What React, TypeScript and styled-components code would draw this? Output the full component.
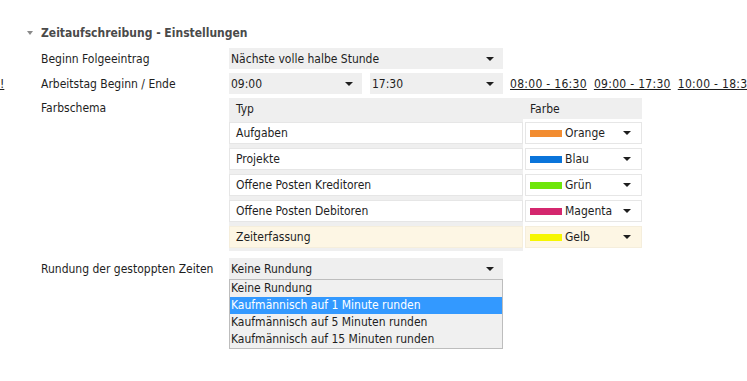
import React from 'react';
import styled, { createGlobalStyle } from 'styled-components';

const GlobalStyle = createGlobalStyle`
  body {
    margin: 0;
    background: #ffffff;
    font-family: "DejaVu Sans Condensed", "DejaVu Sans", sans-serif;
    font-size: 12px;
    color: #1e1e1e;
  }
`;

const Page = styled.div`
  width: 747px;
  height: 381px;
  overflow: hidden;
  padding-top: 24px;
  box-sizing: border-box;
`;

const SectionHeader = styled.div`
  display: flex;
  align-items: center;
  padding-left: 27px;
  height: 18px;
  font-weight: bold;
  font-size: 12px;
  color: #4a4a4a;
`;

const Caret = styled.span`
  width: 0;
  height: 0;
  border-left: 3px solid transparent;
  border-right: 3px solid transparent;
  border-top: 4px solid #8a8a8a;
  margin-right: 8px;
`;

const Form = styled.div`
  display: grid;
  grid-template-columns: 41px 188px auto;
  row-gap: 4px;
  margin-top: 6px;
`;

const Edge = styled.div`
  display: flex;
  align-items: center;
  a {
    color: #222;
    text-decoration: underline;
  }
`;

const Label = styled.div<{ $top?: boolean; $gap?: number }>`
  display: flex;
  align-items: ${(p) => (p.$top ? 'flex-start' : 'center')};
  padding-top: ${(p) => (p.$top ? '3px' : '0')};
  margin-top: ${(p) => p.$gap ?? 0}px;
  height: ${(p) => (p.$top ? 'auto' : '21px')};
`;

const Controls = styled.div<{ $gap?: number }>`
  display: flex;
  align-items: center;
  gap: 8px;
  margin-top: ${(p) => p.$gap ?? 0}px;
`;

const SelectBox = styled.div<{ $w: number }>`
  position: relative;
  display: flex;
  align-items: center;
  justify-content: space-between;
  flex-shrink: 0;
  width: ${(p) => p.$w}px;
  height: 21px;
  padding: 0 9px 0 2px;
  box-sizing: border-box;
  background: #efefef;
`;

const Arrow = styled.span`
  width: 0;
  height: 0;
  border-left: 4px solid transparent;
  border-right: 4px solid transparent;
  border-top: 4px solid #1e1e1e;
`;

const Preset = styled.a`
  color: #1e1e1e;
  text-decoration: underline;
  white-space: nowrap;
  letter-spacing: 0.3px;
  margin-left: -1px;
`;

const Table = styled.div`
  width: 413px;
`;

const HeadRow = styled.div`
  display: grid;
  grid-template-columns: 296px 117px;
  height: 21px;
  background: #efefef;
  align-items: center;
  span:first-child {
    padding-left: 7px;
  }
  span:last-child {
    padding-left: 5px;
  }
`;

const Row = styled.div`
  display: grid;
  grid-template-columns: 294px 117px;
  column-gap: 2px;
  height: 26px;
`;

const TypeCell = styled.div<{ $active?: boolean }>`
  background: #efefef;
  padding: 3px 0 3px 0;
  & > div {
    display: flex;
    align-items: center;
    height: 20px;
    padding-left: 6px;
    border: 1px solid ${(p) => (p.$active ? '#f5eedc' : '#e6e6e6')};
    background: ${(p) => (p.$active ? '#fdf6e4' : '#ffffff')};
  }
`;

const ColorCell = styled.div<{ $active?: boolean }>`
  display: flex;
  align-items: center;
  margin-top: 3px;
  height: 22px;
  box-sizing: border-box;
  padding: 0 10px 0 4px;
  border: 1px solid ${(p) => (p.$active ? '#f5eedc' : '#e6e6e6')};
  background: ${(p) => (p.$active ? '#fdf6e4' : '#ffffff')};
`;

const Swatch = styled.span<{ $c: string }>`
  width: 32px;
  height: 7px;
  background: ${(p) => p.$c};
  margin-right: 3px;
`;

const ColorName = styled.span`
  flex: 1;
`;

const DropWrap = styled.div`
  position: relative;
`;

const List = styled.ul`
  position: absolute;
  left: 0;
  top: 21px;
  width: 274px;
  margin: 0;
  padding: 0;
  list-style: none;
  background: #f0f0f0;
  border: 1px solid #bdbdbd;
  box-sizing: border-box;
`;

const Item = styled.li<{ $sel?: boolean }>`
  height: 17px;
  line-height: 17px;
  padding-left: 1px;
  white-space: nowrap;
  background: ${(p) => (p.$sel ? '#3399ff' : 'transparent')};
  color: ${(p) => (p.$sel ? '#ffffff' : '#1e1e1e')};
`;

const colors = [
  { typ: 'Aufgaben', name: 'Orange', c: '#f28c30' },
  { typ: 'Projekte', name: 'Blau', c: '#0a74da' },
  { typ: 'Offene Posten Kreditoren', name: 'Grün', c: '#6ee60a' },
  { typ: 'Offene Posten Debitoren', name: 'Magenta', c: '#d4276e' },
  { typ: 'Zeiterfassung', name: 'Gelb', c: '#f6f600', active: true },
];

const rundung = [
  'Keine Rundung',
  'Kaufmännisch auf 1 Minute runden',
  'Kaufmännisch auf 5 Minuten runden',
  'Kaufmännisch auf 15 Minuten runden',
];

export default function App() {
  return (
    <Page>
      <GlobalStyle />
      <SectionHeader>
        <Caret />
        Zeitaufschreibung - Einstellungen
      </SectionHeader>
      <Form>
        <Edge />
        <Label>Beginn Folgeeintrag</Label>
        <Controls>
          <SelectBox $w={274}>
            Nächste volle halbe Stunde
            <Arrow />
          </SelectBox>
        </Controls>

        <Edge>
          <a>!</a>
        </Edge>
        <Label>Arbeitstag Beginn / Ende</Label>
        <Controls>
          <SelectBox $w={133}>
            09:00
            <Arrow />
          </SelectBox>
          <SelectBox $w={133}>
            17:30
            <Arrow />
          </SelectBox>
          <Preset>08:00 - 16:30</Preset>
          <Preset>09:00 - 17:30</Preset>
          <Preset>10:00 - 18:30</Preset>
        </Controls>

        <Edge />
        <Label $top>Farbschema</Label>
        <Table>
          <HeadRow>
            <span>Typ</span>
            <span>Farbe</span>
          </HeadRow>
          {colors.map((r) => (
            <Row key={r.typ}>
              <TypeCell $active={r.active}>
                <div>{r.typ}</div>
              </TypeCell>
              <ColorCell $active={r.active}>
                <Swatch $c={r.c} />
                <ColorName>{r.name}</ColorName>
                <Arrow />
              </ColorCell>
            </Row>
          ))}
        </Table>

        <Edge />
        <Label $gap={5}>Rundung der gestoppten Zeiten</Label>
        <Controls $gap={5}>
          <DropWrap>
            <SelectBox $w={274}>
              Keine Rundung
              <Arrow />
            </SelectBox>
            <List>
              {rundung.map((t, i) => (
                <Item key={t} $sel={i === 1}>
                  {t}
                </Item>
              ))}
            </List>
          </DropWrap>
        </Controls>
      </Form>
    </Page>
  );
}
